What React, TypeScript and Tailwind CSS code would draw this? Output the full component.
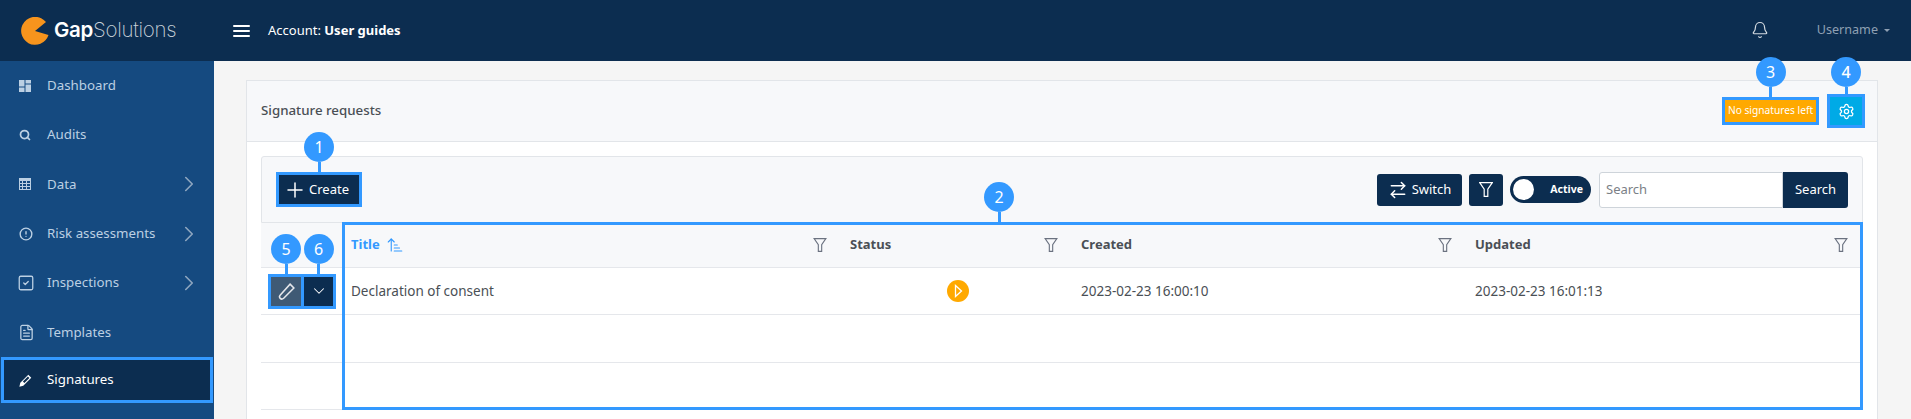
import { ReactNode } from "react";
import {
  ArrowRightLeft,
  ArrowUpNarrowWide,
  Bell,
  ChevronDown,
  ChevronRight,
  CircleAlert,
  FileText,
  Plus,
  Search,
  Settings,
  SquareCheck,
} from "lucide-react";

const font = { fontFamily: '"Noto Sans", "Open Sans", sans-serif' };

function Callout({ n, stem, left = "left-1/2" }: { n: number; stem: string; left?: string }) {
  return (
    <span className={`absolute bottom-full z-10 flex -translate-x-1/2 flex-col items-center ${left}`}>
      <span className="flex h-[30px] w-[30px] items-center justify-center rounded-full bg-[#3399ff] text-[16px] leading-none text-white">
        {n}
      </span>
      <span className={`w-[3px] bg-[#3399ff] ${stem}`} />
    </span>
  );
}

function Funnel({ className }: { className: string }) {
  return (
    <svg viewBox="0 0 14 15" fill="none" stroke="currentColor" strokeWidth="1.2" className={className}>
      <path d="M.7.7h12.6L8.8 7.2v7.1H5.2V7.2z" />
    </svg>
  );
}

function DashIcon() {
  return (
    <svg viewBox="0 0 12 12" fill="currentColor" className="h-3 w-3">
      <rect x="0" y="0" width="5.5" height="6.5" />
      <rect x="6.5" y="0" width="5.5" height="3.5" />
      <rect x="0" y="7.5" width="5.5" height="4.5" />
      <rect x="6.5" y="4.5" width="5.5" height="7.5" />
    </svg>
  );
}

function GridIcon() {
  return (
    <svg viewBox="0 0 12 12" fill="currentColor" className="h-3 w-3">
      <path d="M0 0h12v12H0zM1 3v2h2V3zm3 0v2h3V3zm4 0v2h3V3zM1 6v2h2V6zm3 0v2h3V6zm4 0v2h3V6zM1 9v2h2V9zm3 0v2h3V9zm4 0v2h3V9z" fillRule="evenodd" />
    </svg>
  );
}

function PencilIcon() {
  return (
    <svg viewBox="0 0 14 14" fill="currentColor" className="h-[13px] w-[13px]">
      <path d="M10 .8l3.2 3.2-8.6 8.6L.4 13.6l1-4.2zM4.2 8.2l1.6 1.6 5.4-5.4-1.6-1.6z" />
    </svg>
  );
}

const menu: { label: string; icon: ReactNode; more?: boolean }[] = [
  { label: "Dashboard", icon: <DashIcon /> },
  { label: "Audits", icon: <Search className="h-3 w-3" strokeWidth={3.5} /> },
  { label: "Data", icon: <GridIcon />, more: true },
  { label: "Risk assessments", icon: <CircleAlert className="h-[14px] w-[14px]" strokeWidth={2.4} />, more: true },
  { label: "Inspections", icon: <SquareCheck className="-ml-[2px] h-[18px] w-[18px]" strokeWidth={1.7} />, more: true },
  { label: "Templates", icon: <FileText className="-ml-px h-[17px] w-[17px]" strokeWidth={1.8} /> },
];

function Sidebar() {
  return (
    <aside className="w-[214px] shrink-0 bg-[#154a80] text-[13.3px] text-[#bcd0e3]">
      {menu.map((m) => (
        <div key={m.label} className="flex h-[49.4px] items-center pl-[19px] pr-[12px]">
          <span className="flex w-7 items-center">{m.icon}</span>
          <span className="flex-1">{m.label}</span>
          {m.more && <ChevronRight className="h-[26px] w-[26px] text-[#8ea6bf]" strokeWidth={1.5} />}
        </div>
      ))}
      <div className="mx-px flex h-[46px] items-center border-[3px] border-[#3399ff] bg-[#0c2d50] pl-[15px] text-white">
        <span className="flex w-7 items-center">
          <PencilIcon />
        </span>
        Signatures
      </div>
    </aside>
  );
}

function HeadCell({ label, active }: { label: string; active?: boolean }) {
  return (
    <div className="flex items-center justify-between pl-[8px] pr-[15px]">
      <span className={`flex items-center gap-[6px] text-[13px] font-bold ${active ? "text-[#3399ff]" : "text-[#4a4f55]"}`}>
        {label}
        {active && <ArrowUpNarrowWide className="h-[18px] w-[18px]" strokeWidth={1.5} />}
      </span>
      <Funnel className="h-[14px] w-[14px] text-[#6b7280]" />
    </div>
  );
}

const columns = "grid grid-cols-[82px_499px_231px_394px_1fr]";

function SignatureTable() {
  return (
    <div className="relative">
      <div className={`${columns} h-[45px] border-b border-[#e5e7eb] bg-[#f7f8fa]`}>
        <div />
        <HeadCell label="Title" active />
        <HeadCell label="Status" />
        <HeadCell label="Created" />
        <HeadCell label="Updated" />
      </div>
      <div className={`${columns} h-[47px] items-center border-b border-[#e5e7eb] text-[13.5px] text-[#4a4f55]`}>
        <div className="flex pl-[7px]">
          <button className="relative flex h-[35px] w-[36px] items-center justify-center border-[3px] border-[#3399ff] bg-[#3f5a75] text-[#e5e7eb]">
            <Callout n={5} stem="h-[13px]" />
            <svg viewBox="0 0 16 16" fill="none" stroke="currentColor" strokeWidth="1.3" className="h-[19px] w-[19px]">
              <path d="M11 1.8l3.2 3.2-8.6 8.7c-.9.8-2.1.9-2.9.1s-.7-2 .1-2.9z" />
            </svg>
          </button>
          <button className="relative flex h-[35px] w-[32px] items-center justify-center border-[3px] border-l-0 border-[#3399ff] bg-[#0c2d50] text-white">
            <Callout n={6} stem="h-[13px]" />
            <ChevronDown className="h-[18px] w-[18px]" strokeWidth={1.4} />
          </button>
        </div>
        <div className="pl-[8px]">Declaration of consent</div>
        <div className="pl-[105px]">
          <span className="flex h-[22px] w-[22px] items-center justify-center rounded-full bg-[#ffa900] text-white">
            <svg viewBox="0 0 12 14" fill="none" stroke="currentColor" strokeWidth="1.3" className="h-[14px] w-3">
              <path d="M3.5 1.5L9.5 7l-6 5.5z" />
            </svg>
          </span>
        </div>
        <div className="pl-[8px]">2023-02-23 16:00:10</div>
        <div className="pl-[8px]">2023-02-23 16:01:13</div>
      </div>
      <div className="h-[48px] border-b border-[#e5e7eb]" />
      <div className="h-[47px] border-b border-[#e5e7eb]" />
      <div className="absolute -top-px left-[81px] right-0 h-[188px] border-[3px] border-[#3399ff]">
        <Callout n={2} stem="h-[13px]" left="left-[654px]" />
      </div>
    </div>
  );
}

export default function App() {
  return (
    <div style={font} className="flex h-[419px] flex-col overflow-hidden bg-[#f5f5f5]">
      <header className="flex h-[61px] shrink-0 items-center bg-[#0c2d50] text-white">
        <div className="flex w-[233px] items-center pl-[21px]">
          <svg viewBox="0 0 28 28" className="h-[28px] w-[28px]">
            <path d="M14 14L25 5A14 14 0 1 0 27.5 18z" fill="#f7941d" />
          </svg>
          <span style={{ fontFamily: "Inter, sans-serif" }} className="ml-[5px] text-[20.5px] leading-none tracking-[-0.3px]">
            <span className="font-semibold">Gap</span>
            <span className="font-extralight text-[#c7d0d9]">Solutions</span>
          </span>
        </div>
        <svg viewBox="0 0 17 12" fill="currentColor" className="h-[12px] w-[17px]">
          <rect y="0" width="17" height="2" rx="1" />
          <rect y="5" width="17" height="2" rx="1" />
          <rect y="10" width="17" height="2" rx="1" />
        </svg>
        <div className="ml-[18px] text-[13px]">
          Account: <span className="font-bold">User guides</span>
        </div>
        <div className="ml-auto flex items-center pr-[21px] text-[12.6px] text-[#8fa0b3]">
          <Bell className="mr-[48px] h-[18px] w-[18px] text-[#d5dbe1]" strokeWidth={1.6} />
          Username
          <span className="ml-[6px] h-0 w-0 border-x-[3px] border-t-[3px] border-x-transparent border-t-[#8fa0b3]" />
        </div>
      </header>
      <div className="flex flex-1">
        <Sidebar />
        <main className="flex-1 pl-[32px] pr-[33px] pt-[19px]">
          <section className="h-[400px] border border-[#e2e5e9] bg-white">
            <div className="flex h-[61px] items-center justify-between border-b border-[#e2e5e9] bg-[#f7f8fa] pl-[14px] pr-[12px] text-[13.3px] font-medium text-[#4a4f55]">
              Signature requests
              <div className="flex items-center gap-[8px]">
                <span className="relative flex h-[28px] w-[97px] items-center justify-center border-[3px] border-[#3399ff] bg-[#ffa900] text-[10.2px] font-normal text-white">
                  <Callout n={3} stem="h-[13px]" />
                  No signatures left
                </span>
                <button className="relative flex h-[34px] w-[38px] items-center justify-center border-[3px] border-[#3399ff] bg-[#00aae6] text-white">
                  <Callout n={4} stem="h-[10px]" />
                  <Settings className="h-[17px] w-[17px]" strokeWidth={1.8} />
                </button>
              </div>
            </div>
            <div className="px-[14px] pt-[14px]">
              <div className="flex h-[67px] items-center justify-between rounded-t-[3px] border border-[#e2e5e9] bg-[#f7f8fa] pl-[14px] pr-[14px] text-[13px] text-white">
                <button className="relative flex h-[35px] w-[86px] items-center gap-[2px] border-[3px] border-[#3399ff] bg-[#0c2d50] pl-[4px]">
                  <Callout n={1} stem="h-[13px]" />
                  <Plus className="h-[24px] w-[24px]" strokeWidth={1.5} />
                  Create
                </button>
                <div className="flex items-center">
                  <button className="flex h-[32px] w-[85px] items-center justify-center gap-[4px] rounded-[3px] bg-[#0c2d50]">
                    <ArrowRightLeft className="h-[20px] w-[20px]" strokeWidth={1.8} />
                    Switch
                  </button>
                  <button className="ml-[7px] flex h-[32px] w-[34px] items-center justify-center rounded-[3px] bg-[#0c2d50]">
                    <Funnel className="h-[15px] w-[14px] text-white" />
                  </button>
                  <div className="ml-[7px] flex h-[27px] w-[81px] items-center rounded-full bg-[#0c2d50] pl-[3px] pr-[8px] text-[10.5px] font-bold">
                    <span className="h-[21px] w-[21px] rounded-full bg-white" />
                    <span className="ml-auto">Active</span>
                  </div>
                  <div className="ml-[8px] flex h-[36px] w-[184px] items-center rounded-l-[3px] border border-[#ced4da] bg-white pl-[6px] text-[#7b8086]">
                    Search
                  </div>
                  <button className="flex h-[36px] w-[65px] items-center justify-center rounded-r-[3px] bg-[#0c2d50]">
                    Search
                  </button>
                </div>
              </div>
              <SignatureTable />
            </div>
          </section>
        </main>
      </div>
    </div>
  );
}
